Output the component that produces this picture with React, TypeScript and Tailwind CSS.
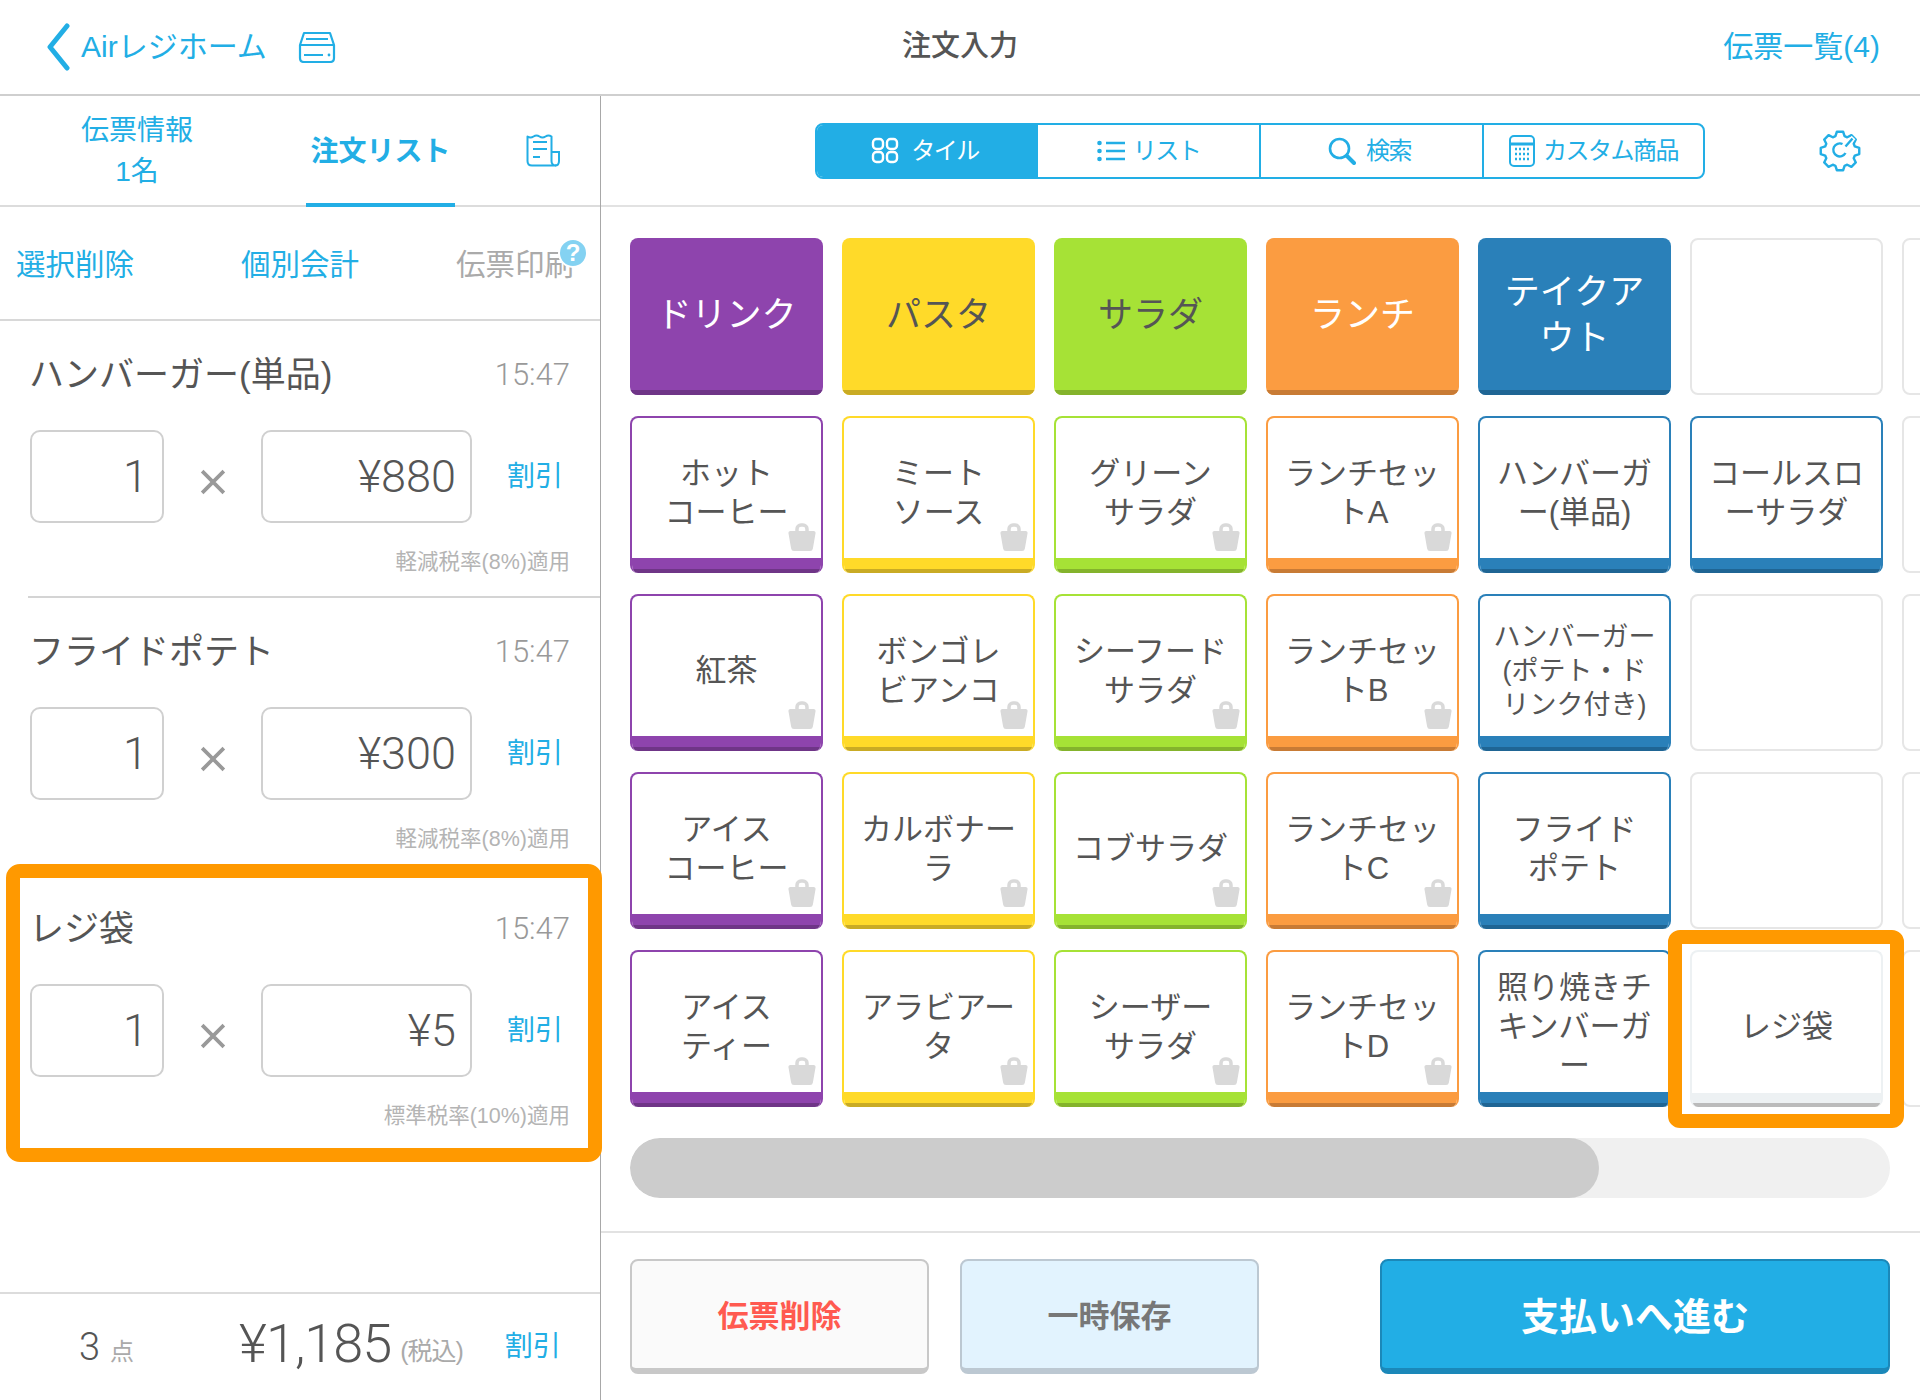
const blue = 'text-[#22aee5]'
const numFont = "font-['Roboto'] font-light"

type Tone = 'purple' | 'yellow' | 'green' | 'orange' | 'blue'

const tones: Record<Tone, { border: string; band: string; edge: string; solid: string }> = {
  purple: { border: 'border-[#8e44ad]', band: 'bg-[#8e44ad]', edge: 'bg-[#6f3587]', solid: 'text-white' },
  yellow: { border: 'border-[#ffda29]', band: 'bg-[#ffda29]', edge: 'bg-[#c9ab24]', solid: 'text-[#555]' },
  green: { border: 'border-[#a6e236]', band: 'bg-[#a6e236]', edge: 'bg-[#84b32c]', solid: 'text-[#555]' },
  orange: { border: 'border-[#fb9c41]', band: 'bg-[#fb9c41]', edge: 'bg-[#c87b35]', solid: 'text-white' },
  blue: { border: 'border-[#2a80b9]', band: 'bg-[#2a80b9]', edge: 'bg-[#1f6594]', solid: 'text-white' },
}

const categories: { label: string; tone: Tone }[] = [
  { label: 'ドリンク', tone: 'purple' },
  { label: 'パスタ', tone: 'yellow' },
  { label: 'サラダ', tone: 'green' },
  { label: 'ランチ', tone: 'orange' },
  { label: 'テイクア\nウト', tone: 'blue' },
]

const rows: { label: string; tone: Tone; small?: boolean; nobag?: boolean }[][] = [
  [
    { label: 'ホット\nコーヒー', tone: 'purple' },
    { label: 'ミート\nソース', tone: 'yellow' },
    { label: 'グリーン\nサラダ', tone: 'green' },
    { label: 'ランチセッ\nトA', tone: 'orange' },
    { label: 'ハンバーガ\nー(単品)', tone: 'blue', nobag: true },
    { label: 'コールスロ\nーサラダ', tone: 'blue', nobag: true },
  ],
  [
    { label: '紅茶', tone: 'purple' },
    { label: 'ボンゴレ\nビアンコ', tone: 'yellow' },
    { label: 'シーフード\nサラダ', tone: 'green' },
    { label: 'ランチセッ\nトB', tone: 'orange' },
    { label: 'ハンバーガー\n(ポテト・ド\nリンク付き)', tone: 'blue', small: true, nobag: true },
  ],
  [
    { label: 'アイス\nコーヒー', tone: 'purple' },
    { label: 'カルボナー\nラ', tone: 'yellow' },
    { label: 'コブサラダ', tone: 'green' },
    { label: 'ランチセッ\nトC', tone: 'orange' },
    { label: 'フライド\nポテト', tone: 'blue', nobag: true },
  ],
  [
    { label: 'アイス\nティー', tone: 'purple' },
    { label: 'アラビアー\nタ', tone: 'yellow' },
    { label: 'シーザー\nサラダ', tone: 'green' },
    { label: 'ランチセッ\nトD', tone: 'orange' },
    { label: '照り焼きチ\nキンバーガ\nー', tone: 'blue', nobag: true },
  ],
]

const orderItems = [
  { name: 'ハンバーガー(単品)', price: '¥880', tax: '軽減税率(8%)適用' },
  { name: 'フライドポテト', price: '¥300', tax: '軽減税率(8%)適用' },
  { name: 'レジ袋', price: '¥5', tax: '標準税率(10%)適用' },
]

// outline of an eight-tooth gear, centred on 21,21
function gearPath() {
  const pts: string[] = []
  for (let i = 0; i < 8; i++) {
    const a = (i * Math.PI) / 4 - Math.PI / 2
    const at = (r: number, d: number) => `${(21 + r * Math.cos(a + d)).toFixed(2)} ${(21 + r * Math.sin(a + d)).toFixed(2)}`
    pts.push(at(15.5, -0.3), at(19.5, -0.16), at(19.5, 0.16), at(15.5, 0.3))
  }
  return `M${pts.join('L')}Z`
}

function BagIcon() {
  return (
    <svg viewBox="0 0 28 28" className="absolute right-[5px] bottom-[22px] h-[28px] w-[28px]">
      <path d="M9 9V6a4 4 0 0 1 4-4h2a4 4 0 0 1 4 4v3" fill="none" stroke="#d9d9d9" strokeWidth="3.5" />
      <path d="M2.5 8h23a2 2 0 0 1 2 2.4l-2.6 15a3 3 0 0 1-3 2.6H6.1a3 3 0 0 1-3-2.6l-2.6-15A2 2 0 0 1 2.5 8z" fill="#d9d9d9" />
    </svg>
  )
}

function CategoryTile({ label, tone }: { label: string; tone: Tone }) {
  const t = tones[tone]
  return (
    <div className={`relative flex h-[157px] w-[193px] shrink-0 items-center justify-center overflow-hidden rounded-[8px] pb-[4px] ${t.band}`}>
      <span className={`whitespace-pre-line text-center text-[35px] leading-[46px] ${t.solid}`}>{label}</span>
      <div className={`absolute inset-x-0 bottom-0 h-[5px] ${t.edge}`} />
    </div>
  )
}

function ItemTile({ label, tone, small, nobag }: { label: string; tone: Tone; small?: boolean; nobag?: boolean }) {
  const t = tones[tone]
  return (
    <div className={`relative flex h-[157px] w-[193px] shrink-0 flex-col overflow-hidden rounded-[8px] border-2 border-b-0 ${t.border}`}>
      <div className="flex flex-1 items-center justify-center pt-[9px]">
        <span className={`whitespace-pre-line text-center text-[#555] ${small ? 'text-[27px] leading-[34px]' : 'text-[31px] leading-[39px]'}`}>
          {label}
        </span>
      </div>
      <div className={`h-[11px] ${t.band}`} />
      <div className={`h-[4px] ${t.edge}`} />
      {!nobag && <BagIcon />}
    </div>
  )
}

function EmptyTile() {
  return <div className="h-[157px] w-[193px] shrink-0 rounded-[8px] border-2 border-[#e6e6e6]" />
}

function BagTile() {
  return (
    <div className="flex h-[157px] w-[193px] shrink-0 flex-col overflow-hidden rounded-[8px] border-2 border-b-0 border-[#edf1f3]">
      <div className="flex flex-1 items-center justify-center pt-[10px] text-[31px] text-[#555]">レジ袋</div>
      <div className="h-[10px] bg-[#edf1f3]" />
      <div className="h-[4px] bg-[#bbbbbb]" />
    </div>
  )
}

function OrderRow({ name, price, tax }: { name: string; price: string; tax: string }) {
  return (
    <div className="ml-[28px] h-[277px] border-b-2 border-[#d4d4d4] pt-[34px]">
      <div className="ml-[2px] flex h-[40px] items-center justify-between pr-[30px]">
        <span className="-ml-[1px] text-[35px] text-[#555]">{name}</span>
        <span className={`${numFont} text-[31px] text-[#999]`}>15:47</span>
      </div>
      <div className="ml-[2px] mt-[35px] flex items-center">
        <div className={`${numFont} flex h-[93px] w-[134px] items-center justify-end rounded-[10px] border-2 border-[#d0d0d0] pr-[14px] text-[45px] text-[#555]`}>1</div>
        <span className="flex w-[97px] translate-y-[5px] justify-center">
          <svg viewBox="0 0 24 24" className="h-[26px] w-[26px]">
            <path d="M2 2l20 20M22 2L2 22" stroke="#999" strokeWidth="3.4" />
          </svg>
        </span>
        <div className={`${numFont} flex h-[93px] w-[211px] items-center justify-end rounded-[10px] border-2 border-[#d0d0d0] pr-[14px] text-[45px] text-[#555]`}>{price}</div>
        <span className={`ml-[35px] text-[28px] ${blue}`}>割引</span>
      </div>
      <div className="mt-[24px] pr-[30px] text-right text-[21.5px] leading-[30px] text-[#b4b4b4]">{tax}</div>
    </div>
  )
}

function Segment({ active, icon, label, className }: { active?: boolean; icon: React.ReactNode; label: string; className: string }) {
  return (
    <div className={`flex h-full items-center justify-center border-r-2 border-[#22aee5] last:border-r-0 ${active ? 'bg-[#22aee5] text-white' : 'text-[#22aee5]'} ${className}`}>
      {icon}
      <span className="pt-[1px] text-[24px] tracking-[-1.5px]">{label}</span>
    </div>
  )
}

export default function App() {
  return (
    <div
      className="relative h-[1400px] w-[1920px] overflow-hidden bg-white"
      style={{ fontFamily: '"Liberation Sans","Noto Sans CJK JP",sans-serif' }}
    >
      {/* top bar */}
      <header className="flex h-[96px] items-center border-b-2 border-[#cfcfcf]">
        <div className="flex w-[640px] items-center pl-[46px]">
          <svg viewBox="0 0 24 48" className="h-[48px] w-[24px]" fill="none" stroke="#22aee5" strokeWidth="5" strokeLinecap="round" strokeLinejoin="round">
            <path d="M21 3L4 24l17 21" />
          </svg>
          <span className={`ml-[11px] -translate-y-[1px] text-[30px] ${blue}`}>Airレジホーム</span>
          <svg viewBox="0 0 38 32" className="ml-[31px] h-[32px] w-[38px]" fill="none" stroke="#22aee5" strokeWidth="2.2">
            <path d="M6 2h26l4 12v13q0 4-4 4H6q-4 0-4-4V14z" strokeLinejoin="round" />
            <path d="M2 14h34M8 8h22M6 24h19" />
            <circle cx="31" cy="24" r="1.4" fill="#22aee5" stroke="none" />
          </svg>
        </div>
        <div className="w-[640px] text-center text-[29px] font-medium text-[#555]">注文入力</div>
        <div className={`flex-1 -translate-y-[1px] pr-[40px] text-right text-[30px] ${blue}`}>伝票一覧(4)</div>
      </header>

      <div className="flex h-[1304px]">
        {/* order column */}
        <aside className="flex w-[601px] shrink-0 flex-col border-r border-[#a8a8a8]">
          <div className="flex h-[111px] shrink-0 items-center border-b-2 border-[#dcdcdc]">
            <div className={`w-[274px] text-center text-[28px] leading-[41px] ${blue}`}>
              伝票情報
              <br />
              1名
            </div>
            <div className={`-mb-[2px] ml-[32px] w-[149px] self-stretch border-b-4 border-[#22aee5] pt-[35px] text-center text-[28px] font-bold ${blue}`}>
              注文リスト
            </div>
            <svg viewBox="0 0 34 33" className="ml-[71px] h-[33px] w-[34px]" fill="none" stroke="#22aee5" strokeWidth="2">
              <path d="M1.5 2.5q3 2 6 0t6 0t6 0t6 0V27q0 4 4 4.5H6q-4.5 0-4.500-4.500z" strokeLinejoin="round" />
              <path d="M26 18h7v9q0 4.5-4 4.500" />
              <path d="M7 8h14M7 15h14M7 23h7" />
            </svg>
          </div>

          <div className="relative flex h-[114px] shrink-0 items-center border-b-2 border-[#d8d8d8] pl-[16px] pt-[4px] text-[29.5px]">
            <span className={`w-[225px] ${blue}`}>選択削除</span>
            <span className={`w-[215px] ${blue}`}>個別会計</span>
            <span className="text-[#aaa]">伝票印刷</span>
            <span className="absolute left-[558px] top-[31px] flex h-[30px] w-[30px] items-center justify-center rounded-full border-2 border-white bg-[#84d2f2] text-[24px] font-bold leading-none text-white">
              ?
            </span>
          </div>

          <div className="min-h-0 flex-1">
            {orderItems.map((item) => (
              <OrderRow key={item.name} {...item} />
            ))}
          </div>

          <div className="flex h-[108px] shrink-0 items-center border-t-2 border-[#dcdcdc]">
            <span className={`${numFont} ml-[79px] text-[38px] text-[#555]`}>3</span>
            <span className="ml-[10px] mt-[10px] text-[24px] text-[#aaa]">点</span>
            <span className={`${numFont} ml-[105px] -mt-[6px] text-[54px] leading-none tracking-[-1px] text-[#555]`}>¥1,185</span>
            <span className="ml-[9px] mt-[10px] text-[25px] tracking-[-1px] text-[#aaa]">(税込)</span>
            <span className={`ml-[42px] text-[28px] ${blue}`}>割引</span>
          </div>
        </aside>

        {/* menu column */}
        <main className="flex min-w-0 flex-1 flex-col">
          <div className="flex h-[111px] shrink-0 items-center border-b-2 border-[#e2e2e2] pl-[214px]">
            <div className="flex h-[56px] w-[890px] overflow-hidden rounded-[8px] border-2 border-[#22aee5]">
              <Segment
                active
                className="w-[221px] gap-[12px] pr-[3px]"
                label="タイル"
                icon={
                  <svg viewBox="0 0 28 27" className="h-[27px] w-[28px]" fill="none" stroke="#fff" strokeWidth="2.4">
                    <rect x="2" y="2" width="10" height="10" rx="3.5" />
                    <rect x="16" y="2" width="10" height="10" rx="3.5" />
                    <rect x="2" y="15" width="10" height="10" rx="3.500" />
                    <rect x="16" y="15" width="10" height="10" rx="3.500" />
                  </svg>
                }
              />
              <Segment
                className="w-[223px] gap-[8px]"
                label="リスト"
                icon={
                  <svg viewBox="0 0 28 22" className="h-[22px] w-[28px]" stroke="#22aee5" strokeWidth="2.6">
                    <path d="M9 3h19M9 11h19M9 19h19" />
                    <circle cx="2.5" cy="3" r="2.3" fill="#22aee5" stroke="none" />
                    <circle cx="2.5" cy="11" r="2.3" fill="#22aee5" stroke="none" />
                    <circle cx="2.5" cy="19" r="2.3" fill="#22aee5" stroke="none" />
                  </svg>
                }
              />
              <Segment
                className="w-[223px] gap-[10px] pr-[4px]"
                label="検索"
                icon={
                  <svg viewBox="0 0 28 28" className="h-[28px] w-[28px]" fill="none" stroke="#22aee5" strokeWidth="2.6" strokeLinecap="round">
                    <circle cx="11.5" cy="11.5" r="9.5" />
                    <path d="M19 19l7 7" strokeWidth="4" />
                  </svg>
                }
              />
              <Segment
                className="flex-1 gap-[8px]"
                label="カスタム商品"
                icon={
                  <svg viewBox="0 0 26 32" className="h-[32px] w-[26px]" fill="none" stroke="#22aee5" strokeWidth="2">
                    <rect x="1" y="1" width="24" height="30" rx="4" />
                    <path d="M1 9h24" strokeWidth="3" />
                    <path d="M6 14h14M6 19h14M6 24h14" strokeDasharray="2 2" strokeWidth="2.4" />
                  </svg>
                }
              />
            </div>
            <svg viewBox="0 0 42 42" className="ml-[114px] h-[42px] w-[42px]" fill="none" stroke="#22aee5" strokeWidth="2.4" strokeLinejoin="round">
              <path d={gearPath()} />
              <path d="M26.5 23a6.5 6.5 0 1 1-3-9" />
              <path d="M26.5 16.5l8-9" stroke="#fff" strokeWidth="5" />
              <path d="M26.5 16.5l7-8" />
            </svg>
          </div>

          <div className="flex min-h-0 flex-col gap-[21px] overflow-hidden pl-[29px] pt-[31px]">
            <div className="flex gap-[19px]">
              {categories.map((c) => (
                <CategoryTile key={c.label} {...c} />
              ))}
              <EmptyTile />
              <EmptyTile />
            </div>
            {rows.map((row, i) => (
              <div key={i} className="flex gap-[19px]">
                {row.map((tile) => (
                  <ItemTile key={tile.label} {...tile} />
                ))}
                {row.length < 6 && (i === 3 ? <BagTile /> : <EmptyTile />)}
                <EmptyTile />
              </div>
            ))}
          </div>

          {/* scrollbar */}
          <div className="ml-[29px] mt-[31px] h-[60px] w-[1260px] shrink-0 overflow-hidden rounded-full bg-[#f0f0f0]">
            <div className="h-full w-[969px] rounded-full bg-[#cccccc]" />
          </div>

          <div className="mt-[33px] flex h-[169px] shrink-0 items-start gap-[31px] border-t-2 border-[#e2e2e2] pl-[29px] pt-[26px]">
            <button className="h-[115px] w-[299px] rounded-[8px] border-2 border-b-[6px] border-[#c8c8c8] bg-[#fafafa] pt-[5px] text-[31px] font-bold text-[#ff5a50]">
              伝票削除
            </button>
            <button className="h-[115px] w-[299px] rounded-[8px] border-2 border-b-[6px] border-[#bcc8d2] bg-[#e2f3fe] pt-[5px] text-[31px] font-bold text-[#777]">
              一時保存
            </button>
            <button className="ml-[90px] h-[115px] w-[510px] rounded-[8px] border-2 border-b-[6px] border-[#1b88b9] bg-[#22aee5] pt-[5px] text-[38px] font-bold text-white">
              支払いへ進む
            </button>
          </div>
        </main>
      </div>

      {/* orange callouts over the order row and the tile */}
      <div className="pointer-events-none absolute left-[6px] top-[864px] h-[298px] w-[596px] rounded-[14px] border-[14px] border-[#ff9900]" />
      <div className="pointer-events-none absolute left-[1668px] top-[930px] h-[198px] w-[236px] rounded-[12px] border-[14px] border-[#ff9900]" />
    </div>
  )
}
